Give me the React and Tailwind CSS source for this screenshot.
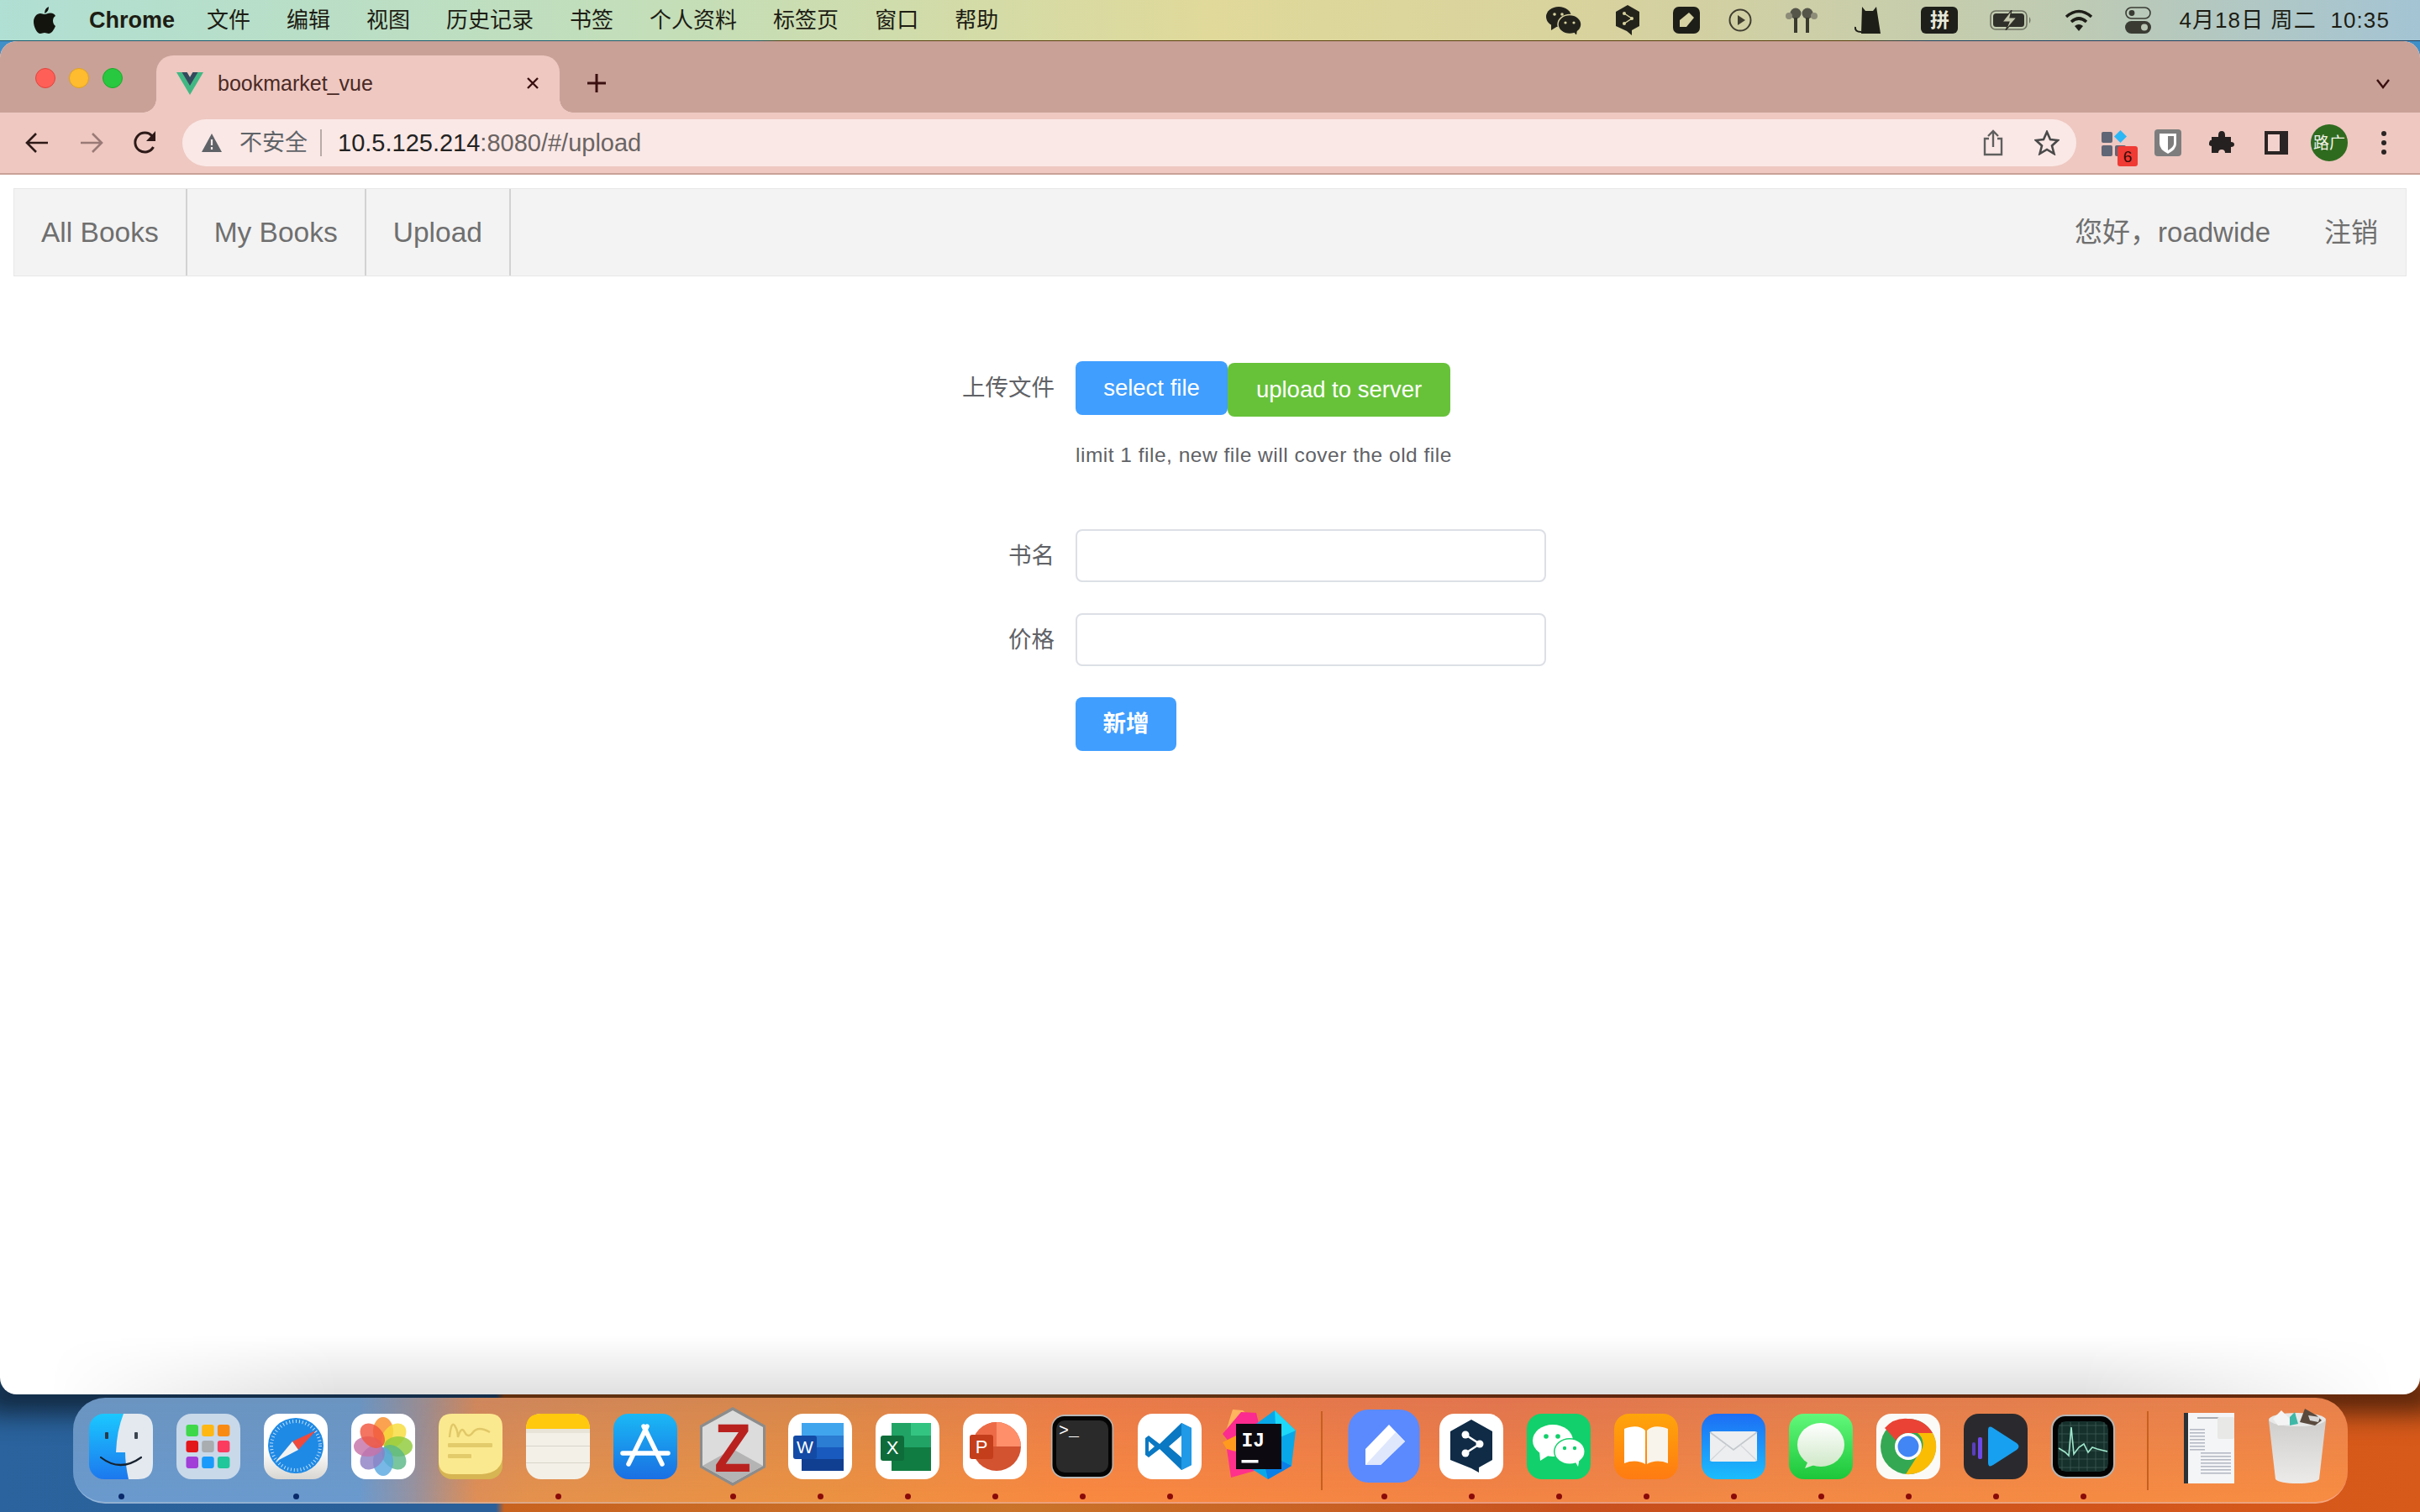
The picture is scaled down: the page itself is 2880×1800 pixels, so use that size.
import React from 'react';

/* ── Dock icons: drawn in a 78-unit box, with room around it for the bigger ones ── */
function Squircle({ fill = '#fff' }) {
  return <rect x="1" y="0" width="76" height="78" rx="18" fill={fill} />;
}

function FinderIcon() {
  return (
    <>
      <defs>
        <linearGradient id="fd" x1="0" y1="0" x2="0" y2="1">
          <stop offset="0" stopColor="#1bc8ff" />
          <stop offset="1" stopColor="#1c78ee" />
        </linearGradient>
      </defs>
      <Squircle fill="url(#fd)" />
      <path d="M42 0H59Q77 0 77 18V60Q77 78 59 78H48Q44 60 44 46H33Q34 20 42 0Z" fill="#e4e9ef" />
      <rect x="20" y="22" width="4" height="8" rx="1" fill="#2a3a4a" />
      <rect x="55" y="22" width="4" height="8" rx="1" fill="#3a4450" />
      <path d="M15 52Q38 70 63 52" fill="none" stroke="#17222e" strokeWidth="2.2" strokeLinecap="round" />
    </>
  );
}

function LaunchpadIcon() {
  const cells = ['#3fd84a', '#ffb813', '#f98b12', '#e3161a', '#a9adb0', '#fb3c5e', '#a13fd8', '#1a9bfb', '#1fc79a'];
  return (
    <>
      <Squircle fill="#c9d9ea" />
      {cells.map((c, i) => (
        <rect key={i} x={12.5 + (i % 3) * 18.7} y={13 + Math.floor(i / 3) * 19} width="14.5" height="14" rx="3" fill={c} />
      ))}
    </>
  );
}

function SafariIcon() {
  return (
    <>
      <defs>
        <linearGradient id="sf" x1="0" y1="0" x2="0" y2="1">
          <stop offset="0.55" stopColor="#fff" />
          <stop offset="1" stopColor="#d8d6d2" />
        </linearGradient>
      </defs>
      <Squircle fill="url(#sf)" />
      <circle cx="39" cy="38" r="33" fill="#1f8ae5" />
      <circle cx="39" cy="38" r="29" fill="none" stroke="#d5e9fa" strokeWidth="4" strokeDasharray="0.9 3" />
      <path d="M63 20L42 43 35 33Z" fill="#ef4a3c" />
      <path d="M15 57L35 33 42 43Z" fill="#f2f2f2" />
    </>
  );
}

function PhotosIcon() {
  const petals = ['#f98d28', '#f6dc3a', '#8fcb3a', '#5cb887', '#5aa8e0', '#8d80c4', '#c673a8', '#f0573f'];
  return (
    <>
      <Squircle />
      {petals.map((c, i) => (
        <ellipse key={c} cx="39" cy="21" rx="12" ry="17" fill={c} opacity="0.82" transform={`rotate(${i * 45} 39 39)`} />
      ))}
    </>
  );
}

function StickiesIcon() {
  return (
    <>
      <rect x="1" y="6" width="76" height="72" rx="16" fill="#d6b552" />
      <path d="M17 0H61Q77 0 77 16V50Q77 70 52 72H17Q1 72 1 56V16Q1 0 17 0Z" fill="#fbe98f" />
      <path d="M14 28Q16 8 20 14T24 28Q28 14 32 22T42 22 62 22" fill="none" stroke="#e0c868" strokeWidth="2.4" />
      <rect x="12" y="35" width="53" height="5" rx="1" fill="#e2cb6a" />
      <rect x="12" y="48" width="28" height="5" rx="1" fill="#e2cb6a" />
    </>
  );
}

function NotesIcon() {
  return (
    <>
      <Squircle fill="#f3f0e8" />
      <path d="M1 18Q1 0 19 0H59Q77 0 77 18V18H1Z" fill="#ffc90e" />
      <rect x="1" y="18" width="76" height="5" fill="#e8e4d8" />
      <rect x="1" y="38" width="76" height="1" fill="#d8d4ca" />
      <rect x="1" y="58" width="76" height="1" fill="#d8d4ca" />
    </>
  );
}

function AppStoreIcon() {
  return (
    <>
      <defs>
        <linearGradient id="as" x1="0" y1="0" x2="0" y2="1">
          <stop offset="0" stopColor="#1ab8f5" />
          <stop offset="1" stopColor="#1a6fe3" />
        </linearGradient>
      </defs>
      <Squircle fill="url(#as)" />
      <g stroke="#fff" strokeWidth="5.5" strokeLinecap="round" fill="none">
        <path d="M41 15L19 60" />
        <path d="M37 15L59 60" />
        <path d="M12 47H66" />
      </g>
    </>
  );
}

function ZoteroIcon() {
  return (
    <>
      <path d="M39 -8L78 14V64L39 86 0 64V14Z" fill="#8c8c8c" />
      <path d="M39 -4L75 16V62L39 82 3 62V16Z" fill="#dcdcdc" />
      <path d="M3 62L39 42 75 62 39 82Z" fill="#b4b4b4" />
      <text x="17" y="69" textLength="44" lengthAdjust="spacingAndGlyphs" fontSize="82" fontWeight="700" fontFamily="Liberation Sans" fill="#b9211f">Z</text>
    </>
  );
}

function WordIcon() {
  return (
    <>
      <Squircle />
      <rect x="17" y="11" width="50" height="57" rx="3" fill="#2b7cd3" />
      <rect x="17" y="11" width="50" height="15" fill="#41a5ee" />
      <rect x="17" y="40" width="50" height="14" fill="#185abd" />
      <rect x="17" y="54" width="50" height="14" fill="#103f91" />
      <rect x="7" y="26" width="28" height="28" rx="3" fill="#134aa5" />
      <text x="21" y="47" textAnchor="middle" fontSize="21" fontFamily="Liberation Sans" fill="#fff">W</text>
    </>
  );
}

function ExcelIcon() {
  return (
    <>
      <Squircle />
      <rect x="20" y="11" width="47" height="57" rx="3" fill="#21a366" />
      <rect x="43" y="11" width="24" height="15" fill="#33c481" />
      <rect x="20" y="11" width="23" height="15" fill="#21a366" />
      <rect x="20" y="40" width="47" height="28" fill="#107c41" />
      <rect x="7" y="26" width="28" height="30" rx="3" fill="#0e6c3a" />
      <text x="21" y="48" textAnchor="middle" fontSize="22" fontFamily="Liberation Sans" fill="#fff">X</text>
    </>
  );
}

function PowerPointIcon() {
  return (
    <>
      <Squircle />
      <circle cx="41" cy="39" r="29" fill="#d35230" />
      <path d="M41 10A29 29 0 0 1 70 39H41Z" fill="#ff8f6b" />
      <path d="M41 10V39H12A29 29 0 0 1 41 10Z" fill="#ed6c47" />
      <rect x="9" y="25" width="28" height="29" rx="3" fill="#c43e1c" />
      <text x="23" y="47" textAnchor="middle" fontSize="22" fontFamily="Liberation Sans" fill="#fff">P</text>
    </>
  );
}

function TerminalIcon() {
  return (
    <>
      <rect x="2" y="1" width="74" height="76" rx="16" fill="#b8b8b8" />
      <rect x="3.5" y="3" width="71" height="72" rx="14" fill="#050505" />
      <rect x="8" y="8" width="62" height="62" rx="10" fill="#2a2a2a" />
      <text x="11" y="26" fontSize="20" fontFamily="Liberation Mono" fill="#fff">&gt;_</text>
    </>
  );
}

function VSCodeIcon() {
  return (
    <>
      <Squircle />
      <path d="M53 11L65 17V61L53 67 27 42 14 52 10 49V29L14 26 27 36Z" fill="#0a78c2" />
      <path d="M53 11L65 17V61L53 67Z" fill="#2099e6" />
      <path d="M53 26L38 39 53 52Z" fill="#fff" />
      <path d="M14 33L21 39 14 45Z" fill="#fff" />
    </>
  );
}

function IdeaIcon() {
  return (
    <>
      <path d="M10 -5L22 -4 30 3 14 30 1 24Z" fill="#ffb45e" />
      <path d="M20 -2L38 -1 44 24 6 34 -2 24Z" fill="#fc2b8f" />
      <path d="M-2 34L14 26 20 44 4 44Z" fill="#ff9a1f" />
      <path d="M8 76L3 42 38 52 36 68Z" fill="#ff318c" />
      <path d="M38 12L60 -4 85 20 80 62 52 78 30 64Z" fill="#08a8e8" />
      <path d="M60 -4L85 20 62 30Z" fill="#1dd8f8" />
      <path d="M80 62L52 78 44 44Z" fill="#0a7fe8" />
      <rect x="14" y="12" width="54" height="54" fill="#0c0a10" />
      <text x="20.500" y="39" fontSize="23" fontWeight="700" fontFamily="Liberation Mono" fill="#fff">IJ</text>
      <rect x="20.500" y="55" width="20" height="3.500" fill="#fff" />
    </>
  );
}

function LarkIcon() {
  return (
    <>
      <rect x="-3.500" y="-5" width="85" height="87" rx="24" fill="#5b8aff" />
      <path d="M45 13L64 33 35 61H17L17 42Z" fill="#fff" />
      <path d="M53 22L64 33 35 61H17Z" fill="#dfe7fd" />
    </>
  );
}

function DeepLIcon() {
  return (
    <>
      <path d="M39 7L64 21V55L48 64V70L39 65 14 55V21Z" fill="#0f2b46" />
      <path d="M32 25L49 36 32 47" fill="none" stroke="#fff" strokeWidth="2.5" />
      <circle cx="32" cy="25" r="4.5" fill="#fff" />
      <circle cx="49" cy="36" r="4.5" fill="#fff" />
      <circle cx="32" cy="47" r="4.5" fill="#fff" />
    </>
  );
}

function WeChatIcon() {
  return (
    <>
      <Squircle fill="#12d06b" />
      <ellipse cx="32" cy="32" rx="24" ry="19" fill="#fff" />
      <path d="M16 44L17 56 28 49Z" fill="#fff" />
      <ellipse cx="52" cy="45" rx="19" ry="16" fill="#12d06b" />
      <ellipse cx="52" cy="45" rx="17.5" ry="14.5" fill="#fff" />
      <path d="M58 56L62 63 64 52Z" fill="#fff" />
      <circle cx="24" cy="27" r="2.8" fill="#12d06b" />
      <circle cx="38" cy="27" r="2.8" fill="#12d06b" />
      <circle cx="46" cy="41" r="2.2" fill="#12d06b" />
      <circle cx="58" cy="41" r="2.2" fill="#12d06b" />
    </>
  );
}

function BooksIcon() {
  return (
    <>
      <defs>
        <linearGradient id="bk" x1="0" y1="0" x2="0" y2="1">
          <stop offset="0" stopColor="#ffa50a" />
          <stop offset="1" stopColor="#ff7b12" />
        </linearGradient>
      </defs>
      <Squircle fill="url(#bk)" />
      <path d="M38 20C33 14 22 14 13 18V59C22 55 32 56 38 60Z" fill="#fff" />
      <path d="M40 20C45 14 56 14 65 18V59C56 55 46 56 40 60Z" fill="#f8f4ec" />
    </>
  );
}

function MailIcon() {
  return (
    <>
      <defs>
        <linearGradient id="ml" x1="0" y1="0" x2="0" y2="1">
          <stop offset="0" stopColor="#1d6ef5" />
          <stop offset="1" stopColor="#1bbdfc" />
        </linearGradient>
      </defs>
      <Squircle fill="url(#ml)" />
      <rect x="11" y="21" width="56" height="36" rx="3" fill="#eceef0" />
      <path d="M11 22L39 43 67 22" fill="none" stroke="#c4c8cc" strokeWidth="1.6" />
      <path d="M11 56L31 37M67 56L47 37" fill="none" stroke="#d4d7da" strokeWidth="1.2" />
    </>
  );
}

function MessagesIcon() {
  return (
    <>
      <defs>
        <linearGradient id="ms" x1="0" y1="0" x2="0" y2="1">
          <stop offset="0" stopColor="#62f87a" />
          <stop offset="1" stopColor="#1cc63a" />
        </linearGradient>
        <linearGradient id="msb" x1="0" y1="0" x2="0" y2="1">
          <stop offset="0" stopColor="#fff" />
          <stop offset="1" stopColor="#cfe8c8" />
        </linearGradient>
      </defs>
      <Squircle fill="url(#ms)" />
      <ellipse cx="39" cy="37" rx="28" ry="26" fill="url(#msb)" />
      <path d="M24 56L20 65 34 60Z" fill="#d8edd0" />
    </>
  );
}

function ChromeIcon() {
  return (
    <>
      <Squircle fill="#fbfaf6" />
      <circle cx="39" cy="39" r="33" fill="#34a853" />
      <path d="M39 6A33 33 0 0 1 68 23H39A16 16 0 0 0 24.5 32L11 17A33 33 0 0 1 39 6Z" fill="#ea4335" />
      <path d="M68 23A33 33 0 0 1 36 72L52 47A16 16 0 0 0 50 23Z" fill="#fbbc04" />
      <circle cx="39" cy="39" r="16" fill="#fff" />
      <circle cx="39" cy="39" r="12.5" fill="#4285f4" />
    </>
  );
}

function InfuseIcon() {
  return (
    <>
      <Squircle fill="#2a2a2e" />
      <rect x="11" y="34" width="4" height="16" rx="2" fill="#5a3ec0" />
      <rect x="18" y="28" width="5" height="26" rx="2" fill="#6f48e8" />
      <path d="M30 20Q30 13 36 17L64 35Q69 39 64 43L36 61Q30 65 30 58Z" fill="#18a0f0" />
    </>
  );
}

function ActivityIcon() {
  const lines = [14, 24, 34, 44, 54, 64];
  return (
    <>
      <rect x="1" y="1" width="76" height="76" rx="17" fill="#b5b5b5" />
      <rect x="3" y="3" width="72" height="72" rx="15" fill="#030303" />
      <rect x="9" y="9" width="60" height="60" rx="10" fill="#16302c" />
      {lines.map((l) => (
        <g key={l} stroke="#3c5a54" strokeWidth="0.8">
          <path d={`M${l} 10V68`} />
          <path d={`M10 ${l}H68`} />
        </g>
      ))}
      <path d="M10 41L18 46 22 50 25 16 28 48 34 40 40 36 45 46 50 40 56 42 68 45" fill="none" stroke="#9fe8cc" strokeWidth="1.6" />
    </>
  );
}

function DocIcon() {
  const rows = [18, 22, 26, 30, 34, 38, 42, 46, 50, 54, 58, 62, 66, 70];
  return (
    <>
      <rect x="8" y="-1" width="60" height="84" fill="#f4f5f7" />
      <rect x="8" y="-1" width="5" height="84" fill="#2b3236" />
      {rows.map((r, i) => (
        <rect key={r} x={i < 7 ? 15 : 28} y={r} width={i < 7 ? 18 : 36} height="1.6" fill="#b5bac4" />
      ))}
      <rect x="24" y="4" width="26" height="2" fill="#a8acb2" />
      <rect x="48" y="4" width="20" height="26" rx="2" fill="#e8e8e6" />
    </>
  );
}

function TrashIcon() {
  return (
    <>
      <defs>
        <linearGradient id="tr" x1="0" y1="0" x2="0" y2="1">
          <stop offset="0" stopColor="#cfcecc" />
          <stop offset="1" stopColor="#ecebe9" />
        </linearGradient>
      </defs>
      <path d="M5 8H73L65 78Q60 83 39 83T13 78Z" fill="url(#tr)" />
      <ellipse cx="39" cy="7" rx="34" ry="8" fill="#e8e8e8" />
      <path d="M10 6L20 -4 30 6 38 2 40 12 16 14Z" fill="#f4f4f4" />
      <path d="M30 4L36 -2 40 12 30 14Z" fill="#3fb8a8" />
      <path d="M42 10L48 -6 62 2 68 8 60 14Z" fill="#5a4a3e" />
      <path d="M52 2L66 4 64 10 54 8Z" fill="#d8d8d8" />
    </>
  );
}

function DockItem({ children, running = true, dot = '#8a0a0a' }) {
  return (
    <div className="flex w-[104px] flex-col items-center pt-[12px]">
      <svg width="92" height="92" viewBox="-7 -7 92 92" className="overflow-visible">{children}</svg>
      {running
        ? <span className="mt-[10px] h-[7px] w-[7px] rounded-full" style={{ backgroundColor: dot }} />
        : <span className="mt-[10px] h-[7px] w-[7px]" />}
    </div>
  );
}

function DockDivider() {
  return <div className="ml-[24px] mr-[21px] mt-[16px] h-[94px] w-[2px] bg-[#c5601f]" />;
}

/* ── Status bar glyphs ── */
function StatusIcons() {
  return (
    <div className="ml-auto flex items-center text-[26px] text-[#1d1d14]">
      <svg width="42" height="34" viewBox="0 0 42 34">
        <ellipse cx="15" cy="13" rx="15" ry="12" fill="#23231c" />
        <path d="M6 21L6 29 14 24Z" fill="#23231c" />
        <ellipse cx="28" cy="22" rx="14" ry="11.5" fill="#23231c" stroke="#d8d29e" strokeWidth="1.5" />
        <path d="M33 31L36 35 37 28Z" fill="#23231c" />
        <circle cx="10" cy="10" r="1.8" fill="#d8d29e" />
        <circle cx="19" cy="10" r="1.8" fill="#d8d29e" />
        <circle cx="23" cy="20" r="1.6" fill="#d8d29e" />
        <circle cx="33" cy="20" r="1.6" fill="#d8d29e" />
      </svg>
      <svg className="ml-[40px]" width="30" height="36" viewBox="0 0 30 36">
        <path d="M15 0L29 8V25L20 30V36L14 31 1 25V8Z" fill="#23231c" />
        <path d="M11 10L20 16 11 22" fill="none" stroke="#d8d29e" strokeWidth="1.5" />
        <circle cx="11" cy="10" r="2" fill="#d8d29e" />
        <circle cx="20" cy="16" r="2" fill="#d8d29e" />
        <circle cx="11" cy="22" r="2" fill="#d8d29e" />
      </svg>
      <svg className="ml-[39px]" width="32" height="32" viewBox="0 0 32 32">
        <rect width="32" height="32" rx="7" fill="#1e1e18" />
        <path d="M19 7L25 13 16 24H8V16Z" fill="#d6d2a2" />
      </svg>
      <svg className="ml-[34px]" width="28" height="28" viewBox="0 0 28 28">
        <circle cx="14" cy="14" r="12.5" fill="none" stroke="#403e30" strokeWidth="2" />
        <path d="M11 8L20 14 11 20Z" fill="#403e30" />
      </svg>
      <svg className="ml-[39px]" width="40" height="32" viewBox="0 0 40 32">
        <circle cx="13" cy="8" r="6.5" fill="#55554a" />
        <circle cx="27" cy="8" r="6.5" fill="#55554a" />
        <circle cx="5" cy="11" r="4" fill="#8c8c78" />
        <circle cx="35" cy="11" r="4" fill="#8c8c78" />
        <rect x="11" y="13" width="4" height="18" fill="#3a3a30" />
        <rect x="25" y="13" width="4" height="18" fill="#3a3a30" />
      </svg>
      <svg className="ml-[42px]" width="34" height="32" viewBox="0 0 34 32">
        <path d="M10 0L14 5H23L27 0 32 32H9Z" fill="#1e1e18" />
        <path d="M9 30Q1 30 2 24" fill="none" stroke="#1e1e18" strokeWidth="2" />
      </svg>
      <span className="ml-[46px] flex h-[32px] w-[44px] items-center justify-center rounded-[6px] bg-[#1e1e1a] text-[23px] font-bold leading-none text-[#e8e8d8]">拼</span>
      <svg className="ml-[38px]" width="50" height="24" viewBox="0 0 50 24">
        <rect x="1" y="1" width="43" height="22" rx="6" fill="none" stroke="#6c7060" strokeWidth="1.6" />
        <rect x="4" y="4" width="37" height="16" rx="3.5" fill="#30302a" />
        <path d="M47 8Q50 12 47 16Z" fill="#6c7060" />
        <path d="M26 0L15 14H23L19 24 32 9H24Z" fill="#c2c6ab" stroke="#30302a" strokeWidth="1.2" />
      </svg>
      <svg className="ml-[39px]" width="34" height="28" viewBox="0 0 34 28">
        <g fill="none" stroke="#1e1e18" strokeWidth="3.6">
          <path d="M2 10Q17 -3 32 10" />
          <path d="M8 16Q17 8 26 16" />
        </g>
        <path d="M12 21Q17 17 22 21L17 27Z" fill="#1e1e18" />
      </svg>
      <svg className="ml-[38px]" width="31" height="32" viewBox="0 0 31 32">
        <rect x="1" y="1" width="29" height="13" rx="6.5" fill="none" stroke="#3a3c34" strokeWidth="1.6" />
        <circle cx="8" cy="7.5" r="3.4" fill="#3a3c34" />
        <rect y="17" width="31" height="15" rx="7.5" fill="#3a3c34" />
        <circle cx="23" cy="24.5" r="4" fill="#b9c6b4" />
      </svg>
      <span className="ml-[33px] mr-[36px] whitespace-pre leading-none tracking-[1.100px]">4月18日 周二  10:35</span>
    </div>
  );
}

function MenuBar() {
  const items = ['文件', '编辑', '视图', '历史记录', '书签', '个人资料', '标签页', '窗口', '帮助'];
  return (
    <div className="flex h-[48px] items-center bg-[linear-gradient(90deg,#b0dfd3_0%,#c4deb8_28%,#e0d99a_50%,#d8d29e_66%,#bfcbb2_85%,#a4c4d4_100%)] pl-[40px] text-[26px] leading-none text-[#1d1d14]">
      <svg width="26" height="32" viewBox="0 0 26 32">
        <path d="M18 0Q18 6 13 8 13 2 18 0ZM13 9C15 9 17 7.500 20 7.500 23 7.500 25 9 26 11 22 13 22 20 26 23 24 28 21 32 18 32 16 32 15 31 13 31 11 31 10 32 8 32 4 32 0 24 0 18 0 12 4 8 8 8 10 8 11 9 13 9Z" fill="#14140f" />
      </svg>
      <span className="ml-[40px] text-[27px] font-bold">Chrome</span>
      <div className="ml-[38px] flex gap-[43px]">
        {items.map((m) => <span key={m}>{m}</span>)}
      </div>
      <StatusIcons />
    </div>
  );
}

/* ── Chrome window ── */
function TabStrip() {
  return (
    <div className="flex h-[85px] items-end bg-[#c9a197]">
      <div className="flex h-[68px] w-[186px] items-start gap-[16px] pl-[42px] pt-[15px]">
        <span className="h-[24px] w-[24px] rounded-full border border-[#e0443e] bg-[#ff5f57]" />
        <span className="h-[24px] w-[24px] rounded-full border border-[#dea123] bg-[#febc2e]" />
        <span className="h-[24px] w-[24px] rounded-full border border-[#1aab29] bg-[#28c840]" />
      </div>
      <div className="relative flex h-[68px] w-[480px] items-center rounded-t-[20px] bg-[#eec8c1] pl-[24px] pb-[2px]">
        <span className="absolute -left-[16px] bottom-0 h-[16px] w-[16px] bg-[radial-gradient(circle_at_0_0,#c9a197_15.500px,#eec8c1_16px)]" />
        <span className="absolute -right-[16px] bottom-0 h-[16px] w-[16px] bg-[radial-gradient(circle_at_100%_0,#c9a197_15.500px,#eec8c1_16px)]" />
        <svg width="32" height="27" viewBox="0 0 32 27">
          <path d="M0 0H12.500L16 6 19.500 0H32L16 27Z" fill="#41b883" />
          <path d="M6.500 0H12.500L16 6 19.500 0H25.500L16 16Z" fill="#35495e" />
        </svg>
        <span className="ml-[17px] text-[25px] leading-none text-[#4a2a26]">bookmarket_vue</span>
        <svg className="ml-auto mr-[24px]" width="16" height="16" viewBox="0 0 16 16">
          <path d="M2 2L14 14M14 2L2 14" stroke="#3a1010" strokeWidth="2.4" />
        </svg>
      </div>
      <svg className="mb-[24px] ml-[33px]" width="22" height="22" viewBox="0 0 22 22">
        <path d="M11 0V22M0 11H22" stroke="#3a0f0f" strokeWidth="3" />
      </svg>
      <svg className="mb-[28px] ml-auto mr-[35px]" width="18" height="12" viewBox="0 0 18 12">
        <path d="M2 1L9 10 16 1" fill="none" stroke="#3a0f0f" strokeWidth="2.4" />
      </svg>
    </div>
  );
}

function Toolbar() {
  return (
    <div className="flex h-[74px] items-start border-b-[2px] border-[#c9a197] bg-[#eec8c1] pt-[8px]">
      <div className="flex h-[56px] w-[217px] items-center pl-[30px]">
        <svg width="28" height="26" viewBox="0 0 28 26">
          <path d="M27 13H3M13 2L2 13 13 24" fill="none" stroke="#2d1a18" strokeWidth="2.600" />
        </svg>
        <svg className="ml-[37px]" width="28" height="26" viewBox="0 0 28 26">
          <path d="M1 13H25M15 2L26 13 15 24" fill="none" stroke="#9a7a76" strokeWidth="2.600" />
        </svg>
        <svg className="ml-[35px]" width="30" height="30" viewBox="0 0 30 30">
          <path d="M24.500 20A11.500 11.500 0 1 1 23 7" fill="none" stroke="#2d1a18" strokeWidth="3" />
          <path d="M27 1V13H16Z" fill="#2d1a18" />
        </svg>
      </div>
      <div className="flex h-[56px] w-[2254px] items-center rounded-full bg-[#fae8e6] pl-[23px]">
        <svg width="24" height="22" viewBox="0 0 24 22">
          <path d="M12 0L24 22H0Z" fill="#5f6368" />
          <path d="M12 7V14M12 16V19" stroke="#fae8e6" strokeWidth="2.200" />
        </svg>
        <span className="ml-[21px] text-[27px] leading-none text-[#5f6368]">不安全</span>
        <span className="ml-[15px] h-[32px] w-[2px] bg-[#b9aaa8]" />
        <span className="ml-[19px] text-[29px] leading-none">
          <span className="text-[#222]">10.5.125.214</span>
          <span className="text-[#6a6463]">:8080/#/upload</span>
        </span>
        <svg className="ml-auto" width="24" height="32" viewBox="0 0 24 32">
          <path d="M7 11H2V30H22V11H17M12 21V2M6 8L12 2 18 8" fill="none" stroke="#5f5f5f" strokeWidth="2.400" />
        </svg>
        <svg className="ml-[37px] mr-[20px]" width="30" height="30" viewBox="0 0 30 30">
          <path d="M15 2L19 11 28 12 21 18.500 23.500 28 15 23 6.500 28 9 18.500 2 12 11 11Z" fill="none" stroke="#4a4a4a" strokeWidth="2.600" />
        </svg>
      </div>
      <div className="flex h-[56px] flex-1 items-center">
        <svg className="ml-[29px] overflow-visible" width="30" height="32" viewBox="0 0 30 32">
          <rect x="1" y="3" width="13" height="13" rx="2" fill="#5f6675" />
          <rect x="1" y="19" width="13" height="13" rx="2" fill="#5f6675" />
          <rect x="17" y="19" width="13" height="13" rx="2" fill="#5f6675" />
          <path d="M23.500 1L31 8.500 23.500 16 16 8.500Z" fill="#2cb7f5" />
          <rect x="20" y="20" width="24" height="24" rx="3" fill="#f03a34" />
          <text x="32" y="39" textAnchor="middle" fontSize="19" fontFamily="Liberation Sans" fill="#3a0a08">6</text>
        </svg>
        <svg className="ml-[34px]" width="32" height="32" viewBox="0 0 32 32">
          <rect width="32" height="32" rx="4" fill="#7d7d7d" />
          <path d="M6 5H26V17Q26 24 16 29 6 24 6 17Z" fill="#fff" />
          <path d="M16 8H23V17Q23 21 16 25Z" fill="#7d7d7d" />
        </svg>
        <svg className="ml-[33px]" width="30" height="30" viewBox="0 0 30 30">
          <path d="M11 6Q11 1 15 1T19 6V8H26V14Q30 14 30 17T26 20V27H19Q19 23 15 23T11 27H3V19Q-1 19 0 15T3 12V8H11Z" fill="#252120" />
        </svg>
        <span className="ml-[36px] h-[28px] w-[28px] border-[4px] border-r-[10px] border-[#2a2524] bg-[#f3d2cd]" />
        <span className="ml-[27px] flex h-[44px] w-[44px] items-center justify-center rounded-full bg-[#2f6b1f] text-[19px] leading-none text-[#f2f2e8]">路广</span>
        <span className="ml-[40px] flex flex-col gap-[5px]">
          <span className="h-[6px] w-[6px] rounded-full bg-[#2a2524]" />
          <span className="h-[6px] w-[6px] rounded-full bg-[#2a2524]" />
          <span className="h-[6px] w-[6px] rounded-full bg-[#2a2524]" />
        </span>
      </div>
    </div>
  );
}

function NavBar() {
  return (
    <nav className="mx-[16px] mt-[16px] flex h-[105px] items-center border border-[#e7e7e7] bg-[#f3f3f3] text-[33px] leading-none text-[#6f6f6f]">
      {['All Books', 'My Books', 'Upload'].map((n) => (
        <a key={n} className="flex h-full items-center border-r-[2px] border-[#d2d2d2] px-[32px] text-[33.500px]">{n}</a>
      ))}
      <a className="ml-auto">您好，roadwide</a>
      <a className="ml-[64px] mr-[33px] text-[32px]">注销</a>
    </nav>
  );
}

function FormRow({ label, children, className = '' }) {
  return (
    <div className={`flex items-center ${className}`}>
      <label className="w-[155px] pr-[25px] text-right text-[27.500px] leading-none text-[#606266]">{label}</label>
      {children}
    </div>
  );
}

function UploadForm() {
  return (
    <div className="ml-[1125px] flex w-[760px] flex-col pt-[101px]">
      <div className="flex items-start">
        <label className="w-[155px] whitespace-nowrap pr-[25px] pt-[16px] text-right text-[27.500px] leading-[32px] text-[#606266]">上传文件</label>
        <div className="flex flex-col">
          <div className="flex items-start">
            <button className="flex h-[64px] w-[181px] items-center justify-center rounded-[8px] bg-[#409eff] text-[27.500px] leading-none text-white">select file</button>
            <button className="mt-[2px] flex h-[64px] w-[265px] items-center justify-center rounded-[8px] bg-[#67c23a] text-[27.500px] leading-none text-white">upload to server</button>
          </div>
          <div className="mt-[34px] whitespace-nowrap text-[24.500px] leading-[24px] tracking-[0.500px] text-[#606266]">limit 1 file, new file will cover the old file</div>
        </div>
      </div>
      <FormRow label="书名" className="mt-[76px]">
        <input className="h-[63px] w-[560px] rounded-[8px] border-[2px] border-[#dcdfe6] bg-white" />
      </FormRow>
      <FormRow label="价格" className="mt-[37px]">
        <input className="h-[63px] w-[560px] rounded-[8px] border-[2px] border-[#dcdfe6] bg-white" />
      </FormRow>
      <div className="mt-[37px] pl-[155px]">
        <button className="flex h-[64px] w-[120px] items-center justify-center rounded-[8px] bg-[#409eff] text-[27.500px] font-bold leading-none text-white">新增</button>
      </div>
    </div>
  );
}

function Dock() {
  const blue = '#0a2a6a';
  return (
    <div className="relative z-10 ml-[87px] mt-[4px] flex h-[126px] w-[2707px] rounded-[38px] border-b-[2px] border-[rgba(255,255,255,0.28)] bg-[linear-gradient(180deg,rgba(110,90,70,0.1),rgba(110,90,70,0)),linear-gradient(90deg,#6a9ace_0,#6a9ace_340px,#a19196_420px,#d98c5f_480px,#e48c4c_900px,#f77f4a_1200px,#ee7850_1700px,#ee8050_2000px,#f5854d_2707px)] pl-[5px] before:absolute before:inset-0 before:-z-10 before:rounded-[38px] before:bg-[linear-gradient(180deg,transparent,rgba(255,160,40,0.3))] before:[mask-image:linear-gradient(90deg,transparent_15%,#000_20%)]">
      <DockItem dot={blue}><FinderIcon /></DockItem>
      <DockItem running={false}><LaunchpadIcon /></DockItem>
      <DockItem dot={blue}><SafariIcon /></DockItem>
      <DockItem running={false}><PhotosIcon /></DockItem>
      <DockItem running={false}><StickiesIcon /></DockItem>
      <DockItem><NotesIcon /></DockItem>
      <DockItem running={false}><AppStoreIcon /></DockItem>
      <DockItem><ZoteroIcon /></DockItem>
      <DockItem><WordIcon /></DockItem>
      <DockItem><ExcelIcon /></DockItem>
      <DockItem><PowerPointIcon /></DockItem>
      <DockItem><TerminalIcon /></DockItem>
      <DockItem><VSCodeIcon /></DockItem>
      <DockItem running={false}><IdeaIcon /></DockItem>
      <DockDivider />
      <DockItem><LarkIcon /></DockItem>
      <DockItem><Squircle /><DeepLIcon /></DockItem>
      <DockItem><WeChatIcon /></DockItem>
      <DockItem><BooksIcon /></DockItem>
      <DockItem><MailIcon /></DockItem>
      <DockItem><MessagesIcon /></DockItem>
      <DockItem><ChromeIcon /></DockItem>
      <DockItem><InfuseIcon /></DockItem>
      <DockItem><ActivityIcon /></DockItem>
      <DockDivider />
      <DockItem running={false}><DocIcon /></DockItem>
      <DockItem running={false}><TrashIcon /></DockItem>
    </div>
  );
}

export default function App() {
  return (
    <div className="flex h-[1800px] w-[2880px] flex-col overflow-hidden bg-[linear-gradient(180deg,#3f8fc8_0,#3f8fc8_80px,transparent_80px),linear-gradient(90deg,#2a639d_0,#2a5f99_590px,#c8621f_600px,#c9742a_1200px,#c8501e_1900px,#d85a1a_2880px)] font-['Liberation_Sans','Noto_Sans_CJK_SC',sans-serif]">
      <MenuBar />
      <div className="h-[1px] bg-[linear-gradient(90deg,#1d5a70_0,#1d5a70_900px,#5a4010_930px,#5a4010_2200px,#1f4060_2300px,#1f4060_2880px)]" />
      <div className="relative h-[1611px] overflow-hidden rounded-[20px] bg-white">
        <TabStrip />
        <Toolbar />
        <NavBar />
        <UploadForm />
        <div className="absolute inset-x-0 bottom-0 h-[70px] bg-[linear-gradient(180deg,rgba(0,0,0,0),rgba(0,0,0,0.12))] [mask-image:linear-gradient(90deg,transparent_2%,#000_14%,#000_86%,transparent_99%)]" />
      </div>
      <div className="h-0 shadow-[0_0_32px_22px_rgba(0,0,0,0.62)]" />
      <Dock />
    </div>
  );
}
